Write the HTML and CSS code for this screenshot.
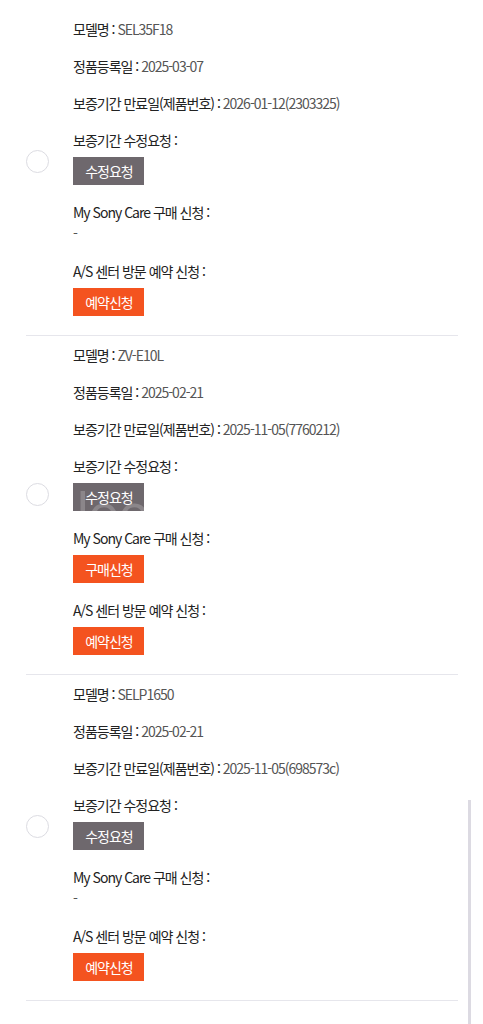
FILE: index.html
```html
<!DOCTYPE html>
<html lang="ko">
<head>
<meta charset="utf-8">
<link rel="stylesheet" href="styles.css">
</head>
<body>
<div class="list">
  <section class="item">
    <div class="radio-col"><span class="radio"></span></div>
    <div class="fields">
      <p class="row"><span class="lbl">모델명 : </span><span class="val">SEL35F18</span></p>
      <p class="row"><span class="lbl">정품등록일 : </span><span class="val">2025-03-07</span></p>
      <p class="row"><span class="lbl">보증기간 만료일(제품번호) : </span><span class="val">2026-01-12(2303325)</span></p>
      <div class="field"><p class="row"><span class="lbl">보증기간 수정요청 :</span></p><span class="btn gray">수정요청</span></div>
      <div class="field"><p class="row"><span class="lbl">My Sony Care 구매 신청 :</span></p><p class="dash">-</p></div>
      <div class="field"><p class="row"><span class="lbl">A/S 센터 방문 예약 신청 :</span></p><span class="btn orange">예약신청</span></div>
    </div>
  </section>
  <section class="item">
    <div class="radio-col"><span class="radio"></span></div>
    <div class="fields">
      <p class="row"><span class="lbl">모델명 : </span><span class="val">ZV-E10L</span></p>
      <p class="row"><span class="lbl">정품등록일 : </span><span class="val">2025-02-21</span></p>
      <p class="row"><span class="lbl">보증기간 만료일(제품번호) : </span><span class="val">2025-11-05(7760212)</span></p>
      <div class="field"><p class="row"><span class="lbl">보증기간 수정요청 :</span></p><span class="btn gray"><span class="ghost">loo</span><span class="btn-text">수정요청</span></span></div>
      <div class="field"><p class="row"><span class="lbl">My Sony Care 구매 신청 :</span></p><span class="btn orange">구매신청</span></div>
      <div class="field"><p class="row"><span class="lbl">A/S 센터 방문 예약 신청 :</span></p><span class="btn orange">예약신청</span></div>
    </div>
  </section>
  <section class="item">
    <div class="radio-col"><span class="radio"></span></div>
    <div class="fields">
      <p class="row"><span class="lbl">모델명 : </span><span class="val">SELP1650</span></p>
      <p class="row"><span class="lbl">정품등록일 : </span><span class="val">2025-02-21</span></p>
      <p class="row"><span class="lbl">보증기간 만료일(제품번호) : </span><span class="val">2025-11-05(698573c)</span></p>
      <div class="field"><p class="row"><span class="lbl">보증기간 수정요청 :</span></p><span class="btn gray">수정요청</span></div>
      <div class="field"><p class="row"><span class="lbl">My Sony Care 구매 신청 :</span></p><p class="dash">-</p></div>
      <div class="field"><p class="row"><span class="lbl">A/S 센터 방문 예약 신청 :</span></p><span class="btn orange">예약신청</span></div>
    </div>
  </section>
</div>
<div class="scrollbar"></div>
</body>
</html>
```
FILE: styles.css
```css
html, body {
  margin: 0;
  padding: 0;
  background: #fff;
}
body {
  font-family: "Noto Sans CJK KR", "Noto Sans", sans-serif;
  font-size: 14px;
  letter-spacing: -1px;
  color: #222;
  overflow: hidden;
}
.list {
  padding-top: 10px;
  margin: 0 25px 0 26px;
}
.item {
  display: flex;
  border-bottom: 1px solid #e6e6ec;
  padding: 9px 0 19px;
}
.radio-col {
  width: 47px;
  display: flex;
  align-items: center;
}
.radio {
  display: block;
  width: 21px;
  height: 21px;
  border: 1px solid #dcdce2;
  border-radius: 50%;
  margin-bottom: 12px;
}
.fields {
  display: flex;
  flex-direction: column;
  gap: 17px;
}
.row {
  margin: 0;
  line-height: 20px;
  height: 20px;
  white-space: nowrap;
}
.val {
  color: #555;
}
.field {
  display: flex;
  flex-direction: column;
  align-items: flex-start;
}
.dash {
  margin: 0;
  line-height: 22px;
  color: #555;
}
.btn {
  position: relative;
  overflow: hidden;
  margin-top: 7px;
  width: 71px;
  height: 28px;
  line-height: 28px;
  text-align: center;
  color: #fff;
  font-size: 14px;
  text-indent: 1px;
}
.btn-text {
  position: relative;
}
.gray {
  background: #6e686d;
}
.orange {
  background: #f4531f;
}
.ghost {
  position: absolute;
  left: 3px;
  top: 2px;
  height: 26px;
  overflow: hidden;
  font-family: "Open Sans", sans-serif;
  font-size: 54px;
  line-height: 54px;
  letter-spacing: -2px;
  color: rgba(255, 255, 255, 0.2);
  text-indent: 0;
}
.scrollbar {
  position: absolute;
  left: 468px;
  top: 800px;
  width: 3px;
  height: 224px;
  background: #dcdae2;
}
```
